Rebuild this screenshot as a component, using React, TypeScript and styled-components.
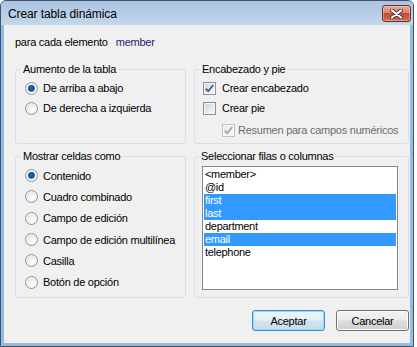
import React from 'react'
import styled, { createGlobalStyle, css } from 'styled-components'

const GlobalStyle = createGlobalStyle`
  html, body {
    margin: 0;
    padding: 0;
    background: #fff;
  }
  body {
    font-family: "Liberation Sans", Arial, sans-serif;
  }
`

const Window = styled.div`
  width: 414px;
  height: 347px;
  box-sizing: border-box;
  border: 1px solid #44526a;
  border-radius: 6px 6px 0 0;
  background: #8fbde4;
  display: flex;
  flex-direction: column;
  overflow: hidden;
`

const TitleBar = styled.div`
  height: 24px;
  flex: none;
  display: flex;
  justify-content: space-between;
  padding: 4px 2px 0 7px;
  box-sizing: border-box;
  background: linear-gradient(#a9c3e1, #c4d7ed);
`

const Title = styled.div`
  font-size: 12px;
  letter-spacing: -0.1px;
  line-height: 18px;
  color: #000;
`

const CloseButton = styled.div`
  width: 29px;
  height: 17px;
  box-sizing: border-box;
  border: 1px solid #6b2c24;
  border-radius: 3px;
  background: linear-gradient(#e8a697 0%, #d98571 45%, #c5492f 50%, #d36a52 100%);
  display: flex;
  align-items: center;
  justify-content: center;
  box-shadow: inset 0 0 0 1px rgba(255, 255, 255, 0.35);
`

const Client = styled.div`
  flex: 1;
  margin: 0 3px 3px;
  background: #f0f0f0;
  padding: 10px 1px 0 11px;
  display: flex;
  flex-direction: column;
  font-size: 11px;
  letter-spacing: -0.25px;
  color: #000;
`

const Header = styled.div`
  display: flex;
  gap: 8px;
  line-height: 14px;
`

const ElementName = styled.span`
  color: #1c1c6e;
`

const Grid = styled.div`
  margin-top: 13px;
  display: grid;
  grid-template-columns: 171px 215px;
  grid-template-rows: 82px 149px;
  column-gap: 8px;
  row-gap: 5px;
`

const Group = styled.fieldset<{ $padLeft?: number }>`
  margin: 0;
  min-width: 0;
  box-sizing: border-box;
  border: 1px solid #d5dfe5;
  border-radius: 3px;
  padding: 2px 4px 0 ${p => p.$padLeft ?? 8}px;
  display: flex;
  flex-direction: column;
`

const Legend = styled.legend`
  margin-left: -3px;
  padding: 0 2px;
  line-height: 14px;
  font-size: 11px;
`

const OptionRow = styled.div<{ $h?: number; $indent?: number; $top?: number; $gap?: number }>`
  height: ${p => p.$h ?? 20}px;
  flex: none;
  display: flex;
  align-items: center;
  gap: ${p => p.$gap ?? 5}px;
  margin-left: ${p => p.$indent ?? 0}px;
  margin-top: ${p => p.$top ?? 0}px;
  white-space: nowrap;
`

const RadioCircle = styled.span<{ $checked?: boolean }>`
  position: relative;
  width: 13px;
  height: 13px;
  flex: none;
  box-sizing: border-box;
  border-radius: 50%;
  border: 1px solid #929292;
  background: radial-gradient(circle at 60% 65%, #ffffff 0%, #f4f4f4 35%, #d2d2d2 100%);
  box-shadow: inset 0 0 0 1px #f6f6f6;
  ${p =>
    p.$checked &&
    css`
      &::after {
        content: '';
        position: absolute;
        left: 2px;
        top: 2px;
        width: 7px;
        height: 7px;
        border-radius: 50%;
        background: radial-gradient(circle at 45% 40%, #2a6fae 0%, #114a85 45%, #4aa3e0 75%, #9bd2f4 100%);
      }
    `}
`

const CheckSquare = styled.span<{ $disabled?: boolean }>`
  width: 13px;
  height: 13px;
  flex: none;
  box-sizing: border-box;
  border: 1px solid ${p => (p.$disabled ? '#c2c2c2' : '#8e8f8f')};
  background: ${p =>
    p.$disabled
      ? 'linear-gradient(135deg, #e8e8e8, #f9f9f9)'
      : 'linear-gradient(135deg, #d3d6da, #f8f8f8)'};
  box-shadow: inset 0 0 0 1px #f8f8f8;
  display: flex;
  align-items: center;
  justify-content: center;
`

const OptionText = styled.span<{ $disabled?: boolean }>`
  color: ${p => (p.$disabled ? '#6d6d6d' : '#000')};
`

const ListBox = styled.div`
  width: 196px;
  height: 124px;
  margin-top: 1px;
  box-sizing: border-box;
  border: 1px solid #828790;
  background: #fff;
  padding: 1px 1px 0 1px;
`

const ListItem = styled.div<{ $selected?: boolean }>`
  height: 13px;
  line-height: 13px;
  padding-left: 1px;
  letter-spacing: -0.3px;
  white-space: nowrap;
  background: ${p => (p.$selected ? '#3399ff' : 'transparent')};
  color: ${p => (p.$selected ? '#fff' : '#000')};
`

const ButtonRow = styled.div`
  margin-top: 12px;
  display: flex;
  justify-content: flex-end;
  gap: 11px;
`

const Button = styled.div<{ $default?: boolean }>`
  width: 73px;
  height: 21px;
  box-sizing: border-box;
  border-radius: 3px;
  display: flex;
  align-items: center;
  justify-content: center;
  border: 1px solid ${p => (p.$default ? '#3c8fd0' : '#707070')};
  background: ${p =>
    p.$default
      ? 'linear-gradient(#eef6fb 0%, #e3eef6 48%, #d1e4f0 52%, #c6dcea 100%)'
      : 'linear-gradient(#f2f2f2 0%, #ebebeb 48%, #dddddd 52%, #cfcfcf 100%)'};
  box-shadow: inset 0 0 0 1px ${p => (p.$default ? '#9fd3f3' : '#fcfcfc')};
`

const Check = ({ disabled }: { disabled?: boolean }) => (
  <svg width="9" height="9" viewBox="0 0 9 9">
    <path
      d="M0.8 4.6 L3.2 7.2 L8.2 1"
      fill="none"
      stroke={disabled ? '#a3a3a3' : '#3e5a98'}
      strokeWidth="1.8"
    />
  </svg>
)

const Radio = ({ label, checked, h }: { label: string; checked?: boolean; h?: number }) => (
  <OptionRow $h={h} $indent={1}>
    <RadioCircle $checked={checked} />
    <OptionText>{label}</OptionText>
  </OptionRow>
)

const listItems = [
  { text: '<member>' },
  { text: '@id' },
  { text: 'first', selected: true },
  { text: 'last', selected: true },
  { text: 'department' },
  { text: 'email', selected: true },
  { text: 'telephone' },
]

const cellKinds = [
  'Contenido',
  'Cuadro combinado',
  'Campo de edición',
  'Campo de edición multilínea',
  'Casilla',
  'Botón de opción',
]

export default function App() {
  return (
    <>
      <GlobalStyle />
      <Window>
        <TitleBar>
          <Title>Crear tabla dinámica</Title>
          <CloseButton>
            <svg width="13" height="10" viewBox="0 0 13 10">
              <path d="M2 1.5 L11 8.5 M11 1.5 L2 8.5" stroke="#4a3a38" strokeWidth="4" strokeLinecap="round" />
              <path d="M2 1.5 L11 8.5 M11 1.5 L2 8.5" stroke="#fff" strokeWidth="2.2" strokeLinecap="round" />
            </svg>
          </CloseButton>
        </TitleBar>
        <Client>
          <Header>
            <span>para cada elemento</span>
            <ElementName>member</ElementName>
          </Header>
          <Grid>
            <Group>
              <Legend>Aumento de la tabla</Legend>
              <Radio label="De arriba a abajo" checked />
              <Radio label="De derecha a izquierda" />
            </Group>
            <Group>
              <Legend>Encabezado y pie</Legend>
              <OptionRow $gap={6}>
                <CheckSquare>
                  <Check />
                </CheckSquare>
                <OptionText>Crear encabezado</OptionText>
              </OptionRow>
              <OptionRow $gap={6}>
                <CheckSquare />
                <OptionText>Crear pie</OptionText>
              </OptionRow>
              <OptionRow $indent={19} $top={2} $gap={3}>
                <CheckSquare $disabled>
                  <Check disabled />
                </CheckSquare>
                <OptionText $disabled>Resumen para campos numéricos</OptionText>
              </OptionRow>
            </Group>
            <Group>
              <Legend>Mostrar celdas como</Legend>
              {cellKinds.map((k, i) => (
                <Radio key={k} label={k} checked={i === 0} h={21.3} />
              ))}
            </Group>
            <Group $padLeft={7}>
              <Legend>Seleccionar filas o columnas</Legend>
              <ListBox>
                {listItems.map(it => (
                  <ListItem key={it.text} $selected={it.selected}>
                    {it.text}
                  </ListItem>
                ))}
              </ListBox>
            </Group>
          </Grid>
          <ButtonRow>
            <Button $default>Aceptar</Button>
            <Button>Cancelar</Button>
          </ButtonRow>
        </Client>
      </Window>
    </>
  )
}
